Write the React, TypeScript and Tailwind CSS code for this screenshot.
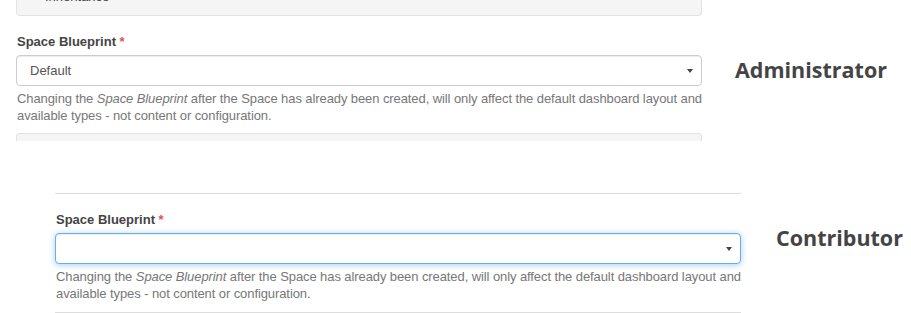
import React from "react";

const SANS = "font-['Liberation_Sans',Arial,sans-serif]";

function Caret() {
  return (
    <svg width="6" height="4" viewBox="0 0 6 4" className="absolute right-[8px] top-1/2 -translate-y-1/2">
      <path d="M0 0h6L3 4z" fill="#444" />
    </svg>
  );
}

function BlueprintField({ value, focused }: { value?: string; focused?: boolean }) {
  return (
    <div className={SANS}>
      <div className="h-[18px] text-[13px] leading-[18px] font-bold text-[#444] pl-[1px]">
        Space Blueprint <span className="text-[#e05050]">*</span>
      </div>
      <div
        className={
          "relative mt-[4px] flex h-[31px] items-center rounded-[4px] border bg-white pl-[13px] text-[13px] text-[#555] " +
          (focused
            ? "border-[#66afe9] shadow-[inset_0_1px_1px_rgba(0,0,0,0.075),0_1px_6px_rgba(102,175,233,0.6)]"
            : "border-[#ccc] shadow-[inset_0_1px_1px_rgba(0,0,0,0.075)]")
        }
      >
        {value}
        <Caret />
      </div>
      <p className="mt-[4px] -mr-[12px] text-[13px] leading-[17px] tracking-[-0.09px] text-[#777] pl-[1px]">
        Changing the <i>Space Blueprint</i> after the Space has already been created, will only affect the default
        dashboard layout and<br />available types - not content or configuration.
      </p>
    </div>
  );
}

export default function App() {
  return (
    <div className="w-[911px] h-[313px] overflow-hidden bg-white">
      {/* Administrator view */}
      <section className="flex h-[141px] overflow-hidden pl-[16px]">
        <div className="w-[686px] shrink-0">
          <div className="h-[16px] overflow-hidden rounded-b-[4px] border-x border-b border-[#e3e3e3] bg-[#f5f5f5]">
            <div className={SANS + " -mt-[12px] pl-[28px] text-[13px] leading-[18px] text-[#444]"}>Inheritance</div>
          </div>
          <div className="mt-[17px]">
            <BlueprintField value="Default" />
          </div>
          <div className="mt-[9px] h-[30px] rounded-t-[4px] border-x border-t border-[#e3e3e3] bg-[#f5f5f5]" />
        </div>
        <div className="ml-[33px] mt-[56px] font-['Open_Sans',sans-serif] text-[21.5px] leading-[28px] font-bold text-[#444]">
          Administrator
        </div>
      </section>

      {/* Contributor view */}
      <section className="flex pl-[55px]">
        <div className="w-[686px] shrink-0">
          <div className="mt-[52px] border-t border-[#ddd]" />
          <div className="mt-[17px]">
            <BlueprintField focused />
          </div>
          <div className="mt-[10px] border-t border-[#ddd]" />
        </div>
        <div className="ml-[35px] mt-[83px] font-['Open_Sans',sans-serif] text-[21.5px] leading-[28px] font-bold text-[#444]">
          Contributor
        </div>
      </section>
    </div>
  );
}
